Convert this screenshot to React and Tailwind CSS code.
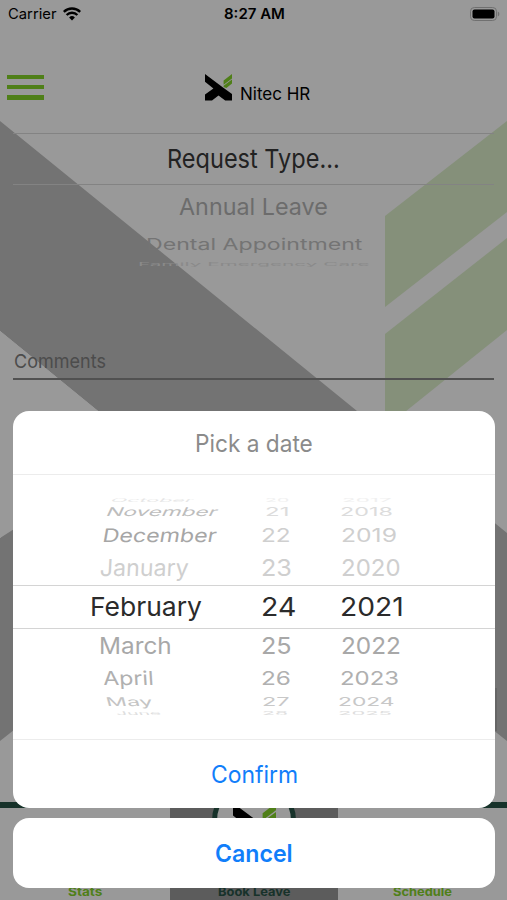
import { useLayoutEffect, useRef, useState } from 'react';

const months = [
  { text: 'October', x: 111, w: 82, sy: 0.2, skew: -12, color: '#e6e6e6' },
  { text: 'November', x: 107, w: 111, sy: 0.46, skew: -14, color: '#bdbdbd' },
  { text: 'December', x: 103, w: 114, sy: 0.72, skew: -8, color: '#a6a6a6' },
  { text: 'January', x: 100, w: 89, sy: 0.9, skew: -3, color: '#cfcfcf' },
  { text: 'February', x: 90, w: 112, sy: 1, skew: 0, color: '#2b2b2b' },
  { text: 'March', x: 99, w: 73, sy: 0.9, skew: 0, color: '#a8a8a8' },
  { text: 'April', x: 103, w: 51, sy: 0.74, skew: 3, color: '#b0b0b0' },
  { text: 'May', x: 106, w: 46, sy: 0.46, skew: 8, color: '#c4c4c4' },
  { text: 'June', x: 116, w: 45, sy: 0.2, skew: 8, color: '#dedede' },
];

const days = [
  { text: '20', x: 265, w: 24, sy: 0.2, color: '#f0f0f0' },
  { text: '21', x: 265, w: 24, sy: 0.44, color: '#dcdcdc' },
  { text: '22', x: 261, w: 30, sy: 0.72, color: '#cfcfcf' },
  { text: '23', x: 261, w: 31, sy: 0.9, color: '#cfcfcf' },
  { text: '24', x: 261, w: 35, sy: 1, color: '#2b2b2b' },
  { text: '25', x: 261, w: 31, sy: 0.9, color: '#a8a8a8' },
  { text: '26', x: 261, w: 30, sy: 0.74, color: '#b0b0b0' },
  { text: '27', x: 262, w: 28, sy: 0.46, color: '#c8c8c8' },
  { text: '28', x: 262, w: 26, sy: 0.2, color: '#dedede' },
];

const years = [
  { text: '2017', x: 342, w: 50, sy: 0.2, color: '#f0f0f0' },
  { text: '2018', x: 340, w: 53, sy: 0.44, color: '#dcdcdc' },
  { text: '2019', x: 341, w: 56, sy: 0.72, color: '#cfcfcf' },
  { text: '2020', x: 341, w: 60, sy: 0.9, color: '#cfcfcf' },
  { text: '2021', x: 340, w: 64, sy: 1, color: '#2b2b2b' },
  { text: '2022', x: 341, w: 60, sy: 0.9, color: '#a8a8a8' },
  { text: '2023', x: 340, w: 59, sy: 0.74, color: '#b0b0b0' },
  { text: '2024', x: 338, w: 57, sy: 0.46, color: '#c8c8c8' },
  { text: '2025', x: 338, w: 54, sy: 0.2, color: '#dedede' },
];

const rowHeights = [
  'h-[6px]',
  'h-[17px]',
  'h-[31px]',
  'h-[34px]',
  'h-[44px] border-y border-[#d4d4d4]',
  'h-[33px]',
  'h-[32px]',
  'h-[16px]',
  'h-[6px]',
];

// stretches its text to exactly w pixels
function Fit({ w, sy = 1, skew = 0, color, className = '', children }) {
  const ref = useRef(null);
  const [sx, setSx] = useState(1);

  useLayoutEffect(() => {
    setSx(w / ref.current.offsetWidth);
  }, [w, children]);

  return (
    <span className={`flex shrink-0 items-center ${className}`} style={{ width: w, color }}>
      <span
        ref={ref}
        className="origin-left whitespace-nowrap shrink-0"
        style={{ transform: `scale(${sx}, ${sy}) skewX(${skew}deg)` }}
      >
        {children}
      </span>
    </span>
  );
}

function WheelRow({ i }) {
  const m = months[i];
  const d = days[i];
  const y = years[i];
  // gaps between the three columns, measured from the sheet's left edge
  return (
    <div className={`flex shrink-0 items-center text-[26px] leading-none ${rowHeights[i]}`}>
      <span className="shrink-0" style={{ width: m.x - 13 }} />
      <Fit w={m.w} sy={m.sy} skew={m.skew} color={m.color}>{m.text}</Fit>
      <span className="shrink-0" style={{ width: d.x - m.x - m.w }} />
      <Fit w={d.w} sy={d.sy} color={d.color}>{d.text}</Fit>
      <span className="shrink-0" style={{ width: y.x - d.x - d.w }} />
      <Fit w={y.w} sy={y.sy} color={y.color}>{y.text}</Fit>
    </div>
  );
}

function Watermark() {
  return (
    <svg className="absolute inset-0" width="507" height="900" viewBox="0 0 507 900">
      <path d="M0 121L357 411L420 462L507 533V741L254 540L0 741V538L98 411L0 331Z" fill="#737373" />
      <path d="M0 331L98 411L200 495V411L0 538Z" fill="#999" />
      <path d="M0 331L120 429V440L0 538Z" fill="#999" />
      <path d="M385 216L507 121V212L385 307Z" fill="#85907a" />
      <path d="M385 334L507 238V330L385 428Z" fill="#85907a" />
      <path d="M495 688H497V731H495Z" fill="#666" />
    </svg>
  );
}

function Logo({ size }) {
  return (
    <svg width={size} height={size} viewBox="0 0 27 27">
      <path d="M0 0L14 10.4L18 13.4L27 20V26.5H20.2L13.5 21.4L7 26.5H0V20.6L8.4 14.4L0 7.8Z" fill="#000" />
      <path d="M18.6 6.4L27 0V4.6L18.6 10.8ZM18.6 11.8L27 5.6V9.6L21.4 14L18.6 12.9Z" fill="#4f7f18" />
    </svg>
  );
}

function StatusBar() {
  return (
    <div className="flex h-[28px] items-center justify-between pl-[8px] pr-[7px] text-[14.5px]">
      <div className="flex w-[130px] items-center gap-[6px]">
        <Fit w={49}>Carrier</Fit>
        <svg width="18" height="14" viewBox="0 0 18 14">
          <path d="M0.8 4.8A11.8 11.8 0 0 1 17.2 4.8" fill="none" stroke="#000" strokeWidth="2.4" />
          <path d="M3.6 8A7.6 7.6 0 0 1 14.4 8" fill="none" stroke="#000" strokeWidth="2.3" />
          <path d="M6.1 10.4A4.2 4.2 0 0 1 11.9 10.4L9 13.5Z" fill="#000" />
        </svg>
      </div>
      <Fit w={61} className="font-semibold">8:27 AM</Fit>
      <div className="flex w-[130px] justify-end">
        <svg width="31" height="15" viewBox="0 0 31 15">
          <rect x="1.5" y="0.5" width="26" height="13" rx="3.8" fill="none" stroke="#707070" strokeWidth="1" />
          <rect x="3.5" y="2.5" width="22" height="9" rx="2" fill="#000" />
          <path d="M28.8 4.5V9.5Q30.4 8.8 30.4 7T28.8 4.5Z" fill="#707070" />
        </svg>
      </div>
    </div>
  );
}

function Header() {
  return (
    <div className="flex h-[105px] pt-[46px]">
      <div className="flex w-[198px] flex-col gap-[6px] pl-[7px] pt-[0.5px]">
        <div className="h-[4.4px] w-[37px] bg-[#4f7f18]" />
        <div className="h-[4.4px] w-[37px] bg-[#4f7f18]" />
        <div className="h-[4.4px] w-[37px] bg-[#4f7f18]" />
      </div>
      <div className="flex h-[27px] gap-[8px] pl-[7px]">
        <Logo size={27} />
        <Fit w={70} className="h-[41px] text-[17px]">Nitec HR</Fit>
      </div>
    </div>
  );
}

function RequestForm() {
  return (
    <div className="flex flex-col px-[13px]">
      <div className="flex h-[52px] items-center justify-center border-y border-[#838383] pb-[2px] text-[26px]">
        <Fit w={173} color="#222">Request Type...</Fit>
      </div>
      <div className="flex h-[43px] items-center justify-center text-[26px]">
        <Fit w={149} sy={0.9} color="#6c6c6c">Annual Leave</Fit>
      </div>
      <div className="flex h-[32px] items-center justify-center text-[26px]">
        <Fit w={216} sy={0.6} color="#747474">Dental Appointment</Fit>
      </div>
      <div className="flex h-[8px] items-center justify-center text-[26px]">
        <Fit w={232} sy={0.18} color="#8a8a8a">Family Emergency Care</Fit>
      </div>
      <div className="mt-[76px] flex h-[36px] items-center border-b-2 border-[#515151] pl-[1px] pt-[3px] text-[19px]">
        <Fit w={92} color="#4c4c4c">Comments</Fit>
      </div>
    </div>
  );
}

function TabBar() {
  return (
    <div className="mt-auto flex h-[98px] border-t-[6px] border-[#17322a] bg-[#999] text-[12px] font-bold leading-[16px]">
      <div className="flex w-[170px] items-end justify-center">
        <Fit w={34} color="#4f7f18">Stats</Fit>
      </div>
      <div className="relative flex w-[168px] items-end justify-center bg-[#5c5c5c]">
        <div className="absolute left-[42px] top-[-29px] flex h-[84px] w-[84px] rounded-full border-[5px] border-[#17322a] bg-[#999] pl-[16px] pt-[19px]">
          <Logo size={43} />
        </div>
        <Fit w={72} color="#17322a">Book Leave</Fit>
      </div>
      <div className="flex w-[169px] items-end justify-center">
        <Fit w={59} color="#4f7f18">Schedule</Fit>
      </div>
    </div>
  );
}

function DateSheet() {
  return (
    <div className="absolute inset-0 flex flex-col gap-[10px] px-[13px] pt-[411px]">
      <div className="flex h-[397px] w-[482px] flex-col rounded-[16px] bg-white">
        <div className="flex h-[64px] items-center justify-center border-b border-[#ececec] pt-[2px] text-[24px]">
          <Fit w={118} color="#8b8b8b">Pick a date</Fit>
        </div>
        <div className="flex h-[265px] flex-col border-b border-[#ececec] pt-[22px]">
          {months.map((m, i) => (
            <WheelRow key={m.text} i={i} />
          ))}
        </div>
        <button className="flex flex-1 items-center justify-center pt-[1px] text-[24px]">
          <Fit w={87} color="#117efa">Confirm</Fit>
        </button>
      </div>
      <button className="flex h-[70px] w-[482px] items-center justify-center rounded-[16px] bg-white pt-[1px] text-[24px] font-semibold">
        <Fit w={78} color="#117efa">Cancel</Fit>
      </button>
    </div>
  );
}

export default function App() {
  return (
    <div className="relative h-[900px] w-[507px] overflow-hidden bg-[#999] font-['Inter','Liberation_Sans',sans-serif] text-black">
      <Watermark />
      <div className="relative flex h-full flex-col">
        <StatusBar />
        <Header />
        <RequestForm />
        <TabBar />
      </div>
      <DateSheet />
    </div>
  );
}
